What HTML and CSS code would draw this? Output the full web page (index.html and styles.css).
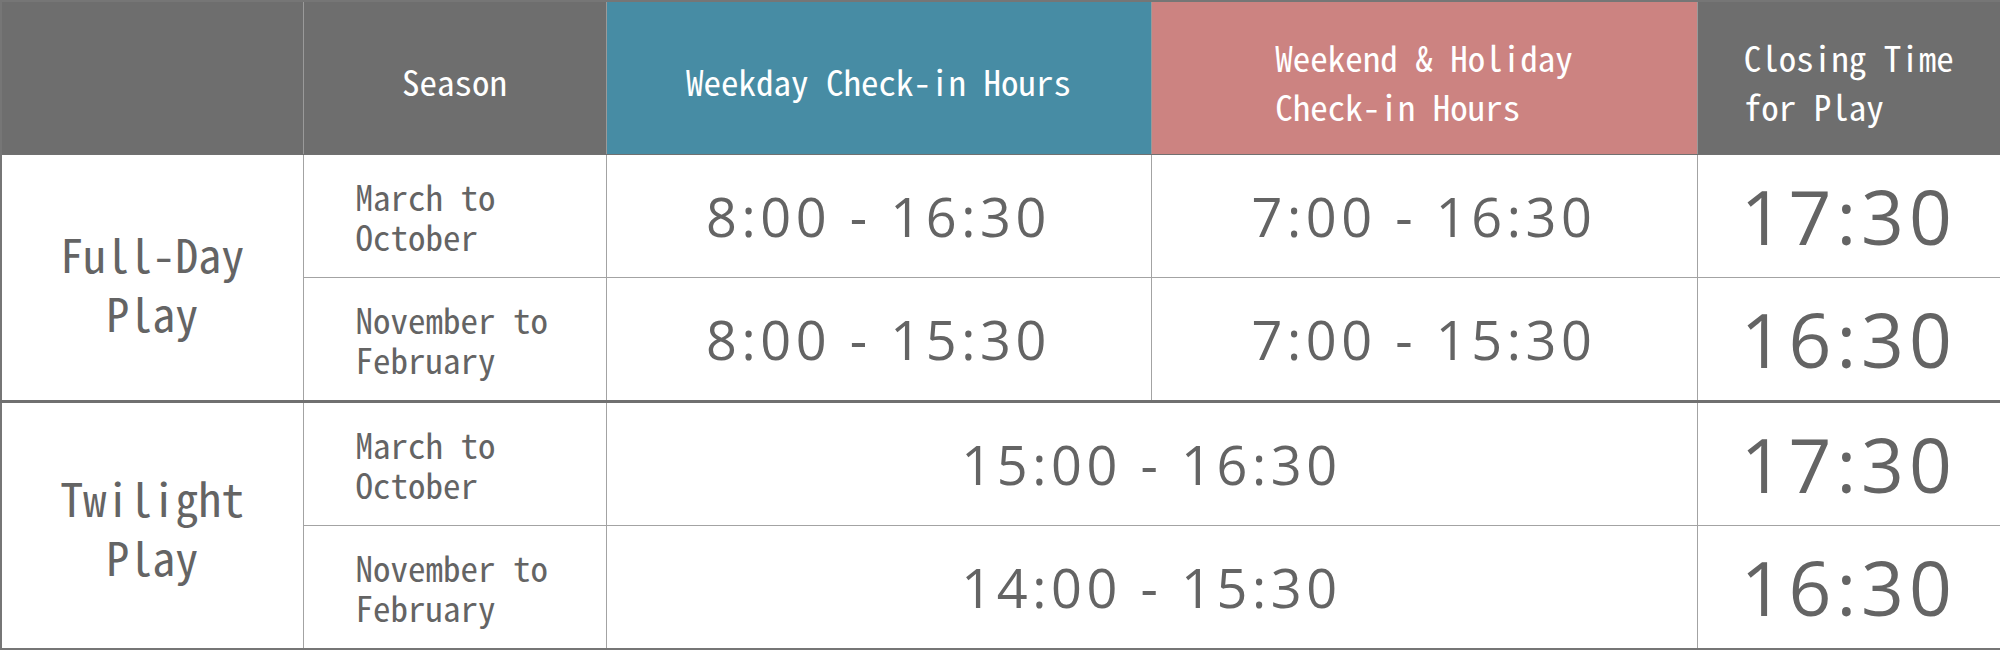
FILE: index.html
```html
<!DOCTYPE html>
<html lang="en">
<head>
<meta charset="utf-8">
<title>Play Hours</title>
<link rel="stylesheet" href="styles.css">
</head>
<body>
<table class="schedule">
  <colgroup>
    <col class="col-plan">
    <col class="col-season">
    <col class="col-weekday">
    <col class="col-weekend">
    <col class="col-close">
  </colgroup>
  <thead>
    <tr>
      <th class="head head-gray"></th>
      <th class="head head-gray">Season</th>
      <th class="head head-blue">Weekday Check-in Hours</th>
      <th class="head head-pink"><span class="stack">Weekend &amp; Holiday<br>Check-in Hours</span></th>
      <th class="head head-gray head-last"><span class="stack">Closing Time<br>for Play</span></th>
    </tr>
  </thead>
  <tbody>
    <tr class="row">
      <td class="plan plan-first" rowspan="2">Full-Day<br>Play</td>
      <td class="season">March to<br>October</td>
      <td class="time">8:00 - 16:30</td>
      <td class="time">7:00 - 16:30</td>
      <td class="close">17:30</td>
    </tr>
    <tr class="row">
      <td class="season">November to<br>February</td>
      <td class="time">8:00 - 15:30</td>
      <td class="time">7:00 - 15:30</td>
      <td class="close">16:30</td>
    </tr>
    <tr class="row row-group">
      <td class="plan plan-second" rowspan="2">Twilight<br>Play</td>
      <td class="season">March to<br>October</td>
      <td class="time" colspan="2">15:00 - 16:30</td>
      <td class="close">17:30</td>
    </tr>
    <tr class="row">
      <td class="season">November to<br>February</td>
      <td class="time" colspan="2">14:00 - 15:30</td>
      <td class="close">16:30</td>
    </tr>
  </tbody>
</table>
</body>
</html>
```

FILE: styles.css
```css
html, body {
  margin: 0;
  padding: 0;
  background: #ffffff;
}

.schedule {
  width: 2000px;
  border-collapse: collapse;
  table-layout: fixed;
  border: 2px solid #767676;
  font-family: "Noto Sans CJK JP", "DejaVu Sans Mono", monospace;
  font-feature-settings: "hwid" 1;
  color: #646464;
}

.col-plan { width: 302px; }
.col-season { width: 303px; }
.col-weekday { width: 545px; }
.col-weekend { width: 546px; }
.col-close { width: 304px; }

.head {
  height: 147px;
  padding: 5px 0 0 0;
  font-size: 35px;
  font-weight: 400;
  line-height: 49px;
  color: #ffffff;
  text-align: center;
  vertical-align: middle;
  border-left: 1px solid #9a9a9a;
  border-bottom: 1px solid #707070;
}

.head-gray { background: #6e6e6e; }
.head-blue { background: #478ca4; }
.head-pink { background: #cc8381; }

.stack {
  display: inline-block;
  text-align: left;
}

.row td {
  height: 122px;
  padding: 0;
  border: 1px solid #a3a3a3;
  vertical-align: middle;
}

.row-group td {
  border-top: 3px solid #707070;
}

.plan {
  font-size: 46px;
  line-height: 59px;
  text-align: center;
}

.plan-first { padding-top: 10px !important; }
.plan-second { padding-top: 2px !important; }

.season {
  font-size: 35px;
  line-height: 40px;
  text-align: left;
  padding-left: 52px !important;
}

.time {
  font-family: "Open Sans", "Liberation Sans", sans-serif;
  font-feature-settings: normal;
  font-size: 54px;
  letter-spacing: 4.6px;
  text-align: center;
}

.close {
  font-family: "Open Sans", "Liberation Sans", sans-serif;
  font-feature-settings: normal;
  font-size: 75px;
  letter-spacing: 5px;
  text-align: center;
}
```
